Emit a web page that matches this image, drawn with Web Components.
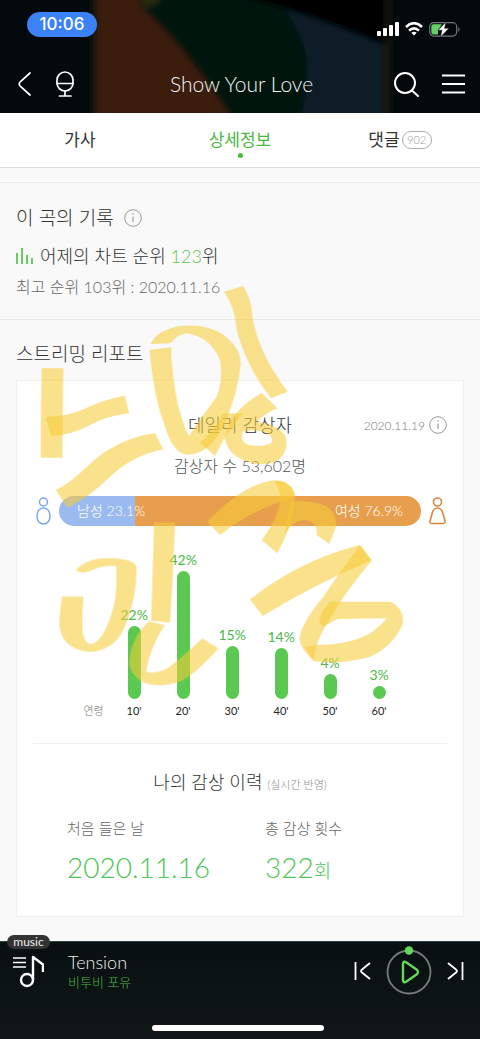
<!DOCTYPE html>
<html lang="ko">
<head>
<meta charset="utf-8">
<meta name="viewport" content="width=device-width, initial-scale=1">
<title>Show Your Love</title>
<style>
html, body { margin: 0; background: #f9f9f9; }
body { font-family: Lato, "Noto Sans CJK KR", sans-serif; font-weight: 300; color: #333; }
</style>
</head>
<body>
<music-app></music-app>
<script>
const base = `<style>
*{box-sizing:border-box}
:host{display:block}
h1,h2,h3,p,dl,dd,dt,ul{margin:0;padding:0;font-weight:inherit}
button{background:none;border:0;padding:0;margin:0;font:inherit;color:inherit;display:flex}
svg{display:block}
a{color:inherit;text-decoration:none}
</style>`;
function define(name, html) {
  const t = document.createElement('template');
  t.innerHTML = base + html;
  customElements.define(name, class extends HTMLElement {
    constructor() {
      super();
      this.attachShadow({ mode: 'open' }).append(t.content.cloneNode(true));
    }
  });
}

define('info-button', `<style>:host{display:inline-block}</style>
<button aria-label="안내"><svg width="18" height="18" viewBox="0 0 18 18" fill="none" stroke="#999"><circle cx="9" cy="9" r="8.3"/><path d="M9 7.5v5.5" stroke-width="1.2"/><circle cx="9" cy="5" r=".8" fill="#999" stroke="none"/></svg></button>`);

define('status-bar', `<style>
:host{display:flex;justify-content:space-between;align-items:flex-start;padding:12px 20px 0 27px;height:56px}
time{background:#3a82f6;color:#fff;font:500 17px/25px Inter,sans-serif;width:70px;height:25px;border-radius:13px;text-align:center}
div{display:flex;gap:6px;padding-top:10px}
</style>
<time>10:06</time>
<div>
<svg width="22" height="14" viewBox="0 0 22 14" fill="#fff"><rect y="9" width="4" height="5" rx="1"/><rect x="6" y="6" width="4" height="8" rx="1"/><rect x="12" y="3" width="4" height="11" rx="1"/><rect x="18" width="4" height="14" rx="1"/></svg>
<svg width="18" height="14" viewBox="0 0 18 14" fill="none" stroke="#fff" stroke-width="2.6"><path d="M1 5Q9-2.6 17 5M4 8.6Q9 4 14 8.6"/><path d="M9 13.6L6.3 10.8Q9 8.6 11.7 10.8Z" fill="#fff" stroke="none"/></svg>
<svg width="31" height="15" viewBox="0 0 31 15"><rect x=".7" y=".7" width="27" height="13.4" rx="4" fill="none" stroke="#70777a" stroke-width="1.2"/><path d="M4.500 2.300H13L9 8V12.600H4.500Q2.300 12.600 2.300 10.500V4.500Q2.300 2.300 4.500 2.300Z" fill="#65ce66"/><path d="M29.300 5Q32 7.500 29.300 10Z" fill="#70777a"/><path d="M17 0L9 8.300H13L11.500 15L20 6.300H15.500Z" fill="#fff" stroke="#061013" stroke-width=".5"/></svg>
</div>`);

define('top-header', `<style>
:host{position:relative;background:#03090c;color:#fff;height:113px;overflow:hidden}
.art{position:absolute;inset:0;width:100%;height:100%}
.front{position:relative}
nav{display:grid;grid-template-columns:1fr auto 1fr;align-items:center;height:56px;padding:0 15px 0 18px}
h1{font-size:21px;line-height:28px;color:#f4f4f4}
.l,.r{display:flex;align-items:center}
.l{gap:24px}.r{justify-content:flex-end;gap:23px}
</style>
<svg class="art" viewBox="0 0 480 113" preserveAspectRatio="none"><defs><filter id="s" x="-10%" y="-10%" width="120%" height="120%"><feGaussianBlur stdDeviation="3"/></filter></defs>
<g filter="url(#s)"><path fill="#15130f" d="M91-29h300v170H91z"/><path fill="#071a25" d="M270-29h112v170H270z"/><path fill="#3b1a07" d="M97-29h43L248 141H97z"/><path fill="#03150a" d="M140-29h115L277 0Q294 22 302 42Q316 80 292 141H246Q190 50 140 6z"/><path fill="#2b2c08" d="M135-20h24V2l-14 6z"/><path fill="#000" d="M230-29h155v74Q310 14 240-4z"/></g></svg>
<div class="front"><status-bar></status-bar>
<nav><div class="l">
<button aria-label="뒤로"><svg width="14" height="26" viewBox="0 0 14 26" fill="none" stroke="#fff" stroke-width="1.700" stroke-linecap="round"><path d="M12 2L2.500 10.500Q0 13 2.500 15.500L12 24"/></svg></button>
<button aria-label="음성 검색"><svg width="18" height="26" viewBox="0 0 18 26" fill="none" stroke="#fff" stroke-width="1.700" stroke-linecap="round"><rect x="1" y="1" width="16" height="19" rx="8"/><path d="M1 12.500h16M9 20v4.500M3.500 25h11.500"/></svg></button></div>
<h1>Show Your Love</h1>
<div class="r">
<button aria-label="검색"><svg width="26" height="26" viewBox="0 0 26 26" fill="none" stroke="#fff" stroke-width="2" stroke-linecap="round"><circle cx="12" cy="12" r="10"/><path d="M19 19.500L25 25"/></svg></button>
<button aria-label="메뉴"><svg width="23" height="20" viewBox="0 0 23 20" stroke="#fff" stroke-width="1.900"><path d="M0 1.500h23M0 10h23M0 18.500h23"/></svg></button></div></nav></div>`);

define('page-tabs', `<style>
:host{background:#fff;border-bottom:1px solid #dedede}
nav{display:grid;grid-template-columns:repeat(3,1fr);height:54px}
a{display:flex;justify-content:center;align-items:center;gap:2px;font-size:17px;line-height:24px;font-weight:400;position:relative}
.on{color:#4cb83f}
.on::after{content:"";position:absolute;left:50%;bottom:9px;width:5px;height:5px;margin-left:-2px;border-radius:50%;background:#4cb83f}
small{font-size:11px;line-height:16px;border:1px solid #aaa;border-radius:9px;width:30px;text-align:center;color:#999;font-weight:300}
</style><nav><a href="#lyrics">가사</a><a href="#info" class="on" aria-current="page">상세정보</a><a href="#talk">댓글<small>902</small></a></nav>`);

define('song-record', `<style>
:host{margin-top:14px;border-top:1px solid #eaeaea;border-bottom:1px solid #e6e6e6;padding:21px 16px 20px;background:#f9f9f9}
h2{display:flex;align-items:center;gap:10px;font-size:19px;line-height:28px}
.rank{display:flex;align-items:center;gap:7px;font-size:18px;line-height:26px;margin-top:11px;color:#333}
b{font-weight:inherit;color:#59c854}
.best{font-size:16px;line-height:24px;margin-top:6px;color:#666}
</style><h2>이 곡의 기록 <info-button></info-button></h2>
<p class="rank"><svg width="17" height="16" viewBox="0 0 17 16" stroke="#59c854" stroke-width="1.800"><path d="M1 5v11M6 0v16M11 7v9M16 10v6"/></svg><span>어제의 차트 순위 <b>123</b>위</span></p>
<p class="best">최고 순위 103위 : 2020.11.16</p>`);

define('gender-bar', `<style>
:host{display:flex;align-items:center;justify-content:space-between;gap:8px}
.bar{flex:1;height:30px;border-radius:15px;overflow:hidden;display:flex;justify-content:space-between;font-size:14px;line-height:30px;padding:0 18px;color:#fff;background:linear-gradient(90deg,#9bbaef 21%,#e79f4e 21%)}
</style>
<svg width="15" height="28" viewBox="0 0 15 28" fill="none" stroke="#7aa7ed" stroke-width="1.500"><circle cx="7.500" cy="5" r="4"/><path d="M7.500 11C3 11 1 15 1 19.500C1 24 4 27 7.500 27S14 24 14 19.500C14 15 12 11 7.500 11Z"/></svg>
<div class="bar"><span>남성 23.1%</span><span>여성 76.9%</span></div>
<svg width="17" height="28" viewBox="0 0 17 28" fill="none" stroke="#e0853c" stroke-width="1.600"><circle cx="8.500" cy="5" r="4"/><path d="M8.500 11Q5 11 3.500 15L1 24Q.6 26.500 3 26.500H14Q16.400 26.500 16 24L13.500 15Q12 11 8.500 11Z"/></svg>`);

define('age-bar', `<style>
:host{display:flex;flex-direction:column;align-items:center;width:49px;color:#4db848;font-size:14px;line-height:20px;font-weight:400}
i{display:block;width:13px;height:var(--h);border-radius:7px;background:#5bc951}
.k{font-size:11px;line-height:14px;color:#222;margin-top:5px}
</style><slot name="share"></slot><i></i><span class="k"><slot></slot></span>`);

define('age-chart', `<style>
:host{display:flex;align-items:flex-end;justify-content:center;height:170px;padding-left:7px}
.axis{font-size:11px;line-height:14px;color:#777;padding-right:6px}
age-bar span{margin-bottom:1px}
</style><span class="axis">연령</span>
<age-bar style="--h:73px"><span slot="share">22%</span>10'</age-bar>
<age-bar style="--h:128px"><span slot="share">42%</span>20'</age-bar>
<age-bar style="--h:53px"><span slot="share">15%</span>30'</age-bar>
<age-bar style="--h:51px"><span slot="share">14%</span>40'</age-bar>
<age-bar style="--h:25px"><span slot="share">4%</span>50'</age-bar>
<age-bar style="--h:13px"><span slot="share">3%</span>60'</age-bar>`);

define('listen-history', `<style>
:host{border-top:1px solid #f0f0f0;padding-top:24px}
h3{font-size:18px;line-height:28px;text-align:center}
small{font-size:11px;color:#888}
dl{display:grid;grid-template-columns:1fr 1fr;padding:18px 0 0 34px;gap:16px}
dt{font-size:15px;line-height:22px;color:#666}
dd{font-size:28px;line-height:36px;color:#4fc558;margin-top:10px}
dd span{font-size:19px}
</style><h3>나의 감상 이력 <small>(실시간 반영)</small></h3>
<dl><div><dt>처음 들은 날</dt><dd>2020.11.16</dd></div><div><dt>총 감상 횟수</dt><dd>322<span>회</span></dd></div></dl>`);

define('streaming-report', `<style>
:host{padding:20px 16px 24px;background:#f9f9f9}
h2{font-size:19px;line-height:28px}
.card{background:#fff;border:1px solid #f0f0f0;margin-top:12px;padding:31px 16px 27px}
.head{display:grid;grid-template-columns:1fr auto 1fr;align-items:center}
.head h3{grid-column:2;font-size:18px;line-height:26px}
.date{justify-self:end;display:flex;align-items:center;gap:4px;font-size:12px;color:#777}
.count{font-size:16px;line-height:24px;text-align:center;margin-top:16px;color:#555}
gender-bar{margin:18px 1px 0 3px}
age-chart{margin:22px 0 25px}
</style><h2>스트리밍 리포트</h2>
<div class="card"><div class="head"><h3>데일리 감상자</h3><span class="date">2020.11.19 <info-button></info-button></span></div>
<p class="count">감상자 수 53,602명</p>
<gender-bar></gender-bar><age-chart></age-chart><listen-history></listen-history></div>`);

/* Translucent marker handwriting that lies over the report. */
define('marker-note', `<style>
:host{position:absolute;left:0;right:0;top:280px;pointer-events:none}
svg{width:100%;height:auto}
path{fill:#f6cb38;fill-opacity:.58}
</style><svg viewBox="0 0 1440 1260" aria-hidden="true">
<defs><filter id="soft" x="-5%" y="-5%" width="110%" height="110%"><feGaussianBlur stdDeviation="2"/></filter></defs>
<g filter="url(#soft)">
<g transform="translate(60 0)">
<path d="M65 265H130Q128 400 127 533H62Q62 400 65 265Z"/>
<path d="M77 411Q150 408 190 388Q250 358 314 347L327 400Q260 408 210 435Q150 467 93 468Z"/>
<path d="M107 630Q150 610 200 560Q290 475 405 460L430 508Q340 525 270 590Q210 650 142 683Z"/>
<path d="M389 210L453 202Q455 290 475 380Q495 450 507 468Q530 430 590 350Q610 300 600 240Q570 170 500 160Q475 162 450 190L392 192Q410 150 480 138Q560 130 610 165Q660 200 662 250Q655 340 610 440Q565 525 500 524Q460 520 435 440Q400 350 389 210Z"/>
<path d="M612 35L670 18Q695 60 697 110Q715 220 803 335L752 355Q680 260 650 150Q645 80 612 35Z"/>
</g>
<g transform="translate(570 240)">
<path fill-rule="evenodd" d="M215 98L262 145Q225 160 200 185Q255 190 285 225Q300 270 265 300Q230 320 180 308Q110 285 105 235Q110 160 215 98ZM158 215Q148 245 175 255Q220 262 245 248Q250 225 225 217Q190 205 158 215Z"/>
<path d="M100 160L160 160Q110 215 75 288L30 248Q70 215 100 160Z"/>
</g>
<g transform="translate(120 630)">
<path d="M107 240Q140 205 200 204Q290 205 290 235Q290 330 250 420Q220 480 150 486Q70 480 58 410Q58 370 66 320L130 320Q125 380 128 430Q135 462 155 463Q200 445 225 330Q232 270 228 228Q185 225 150 243Q120 252 107 240Z"/>
<path d="M342 97L405 97Q400 250 390 398L333 392Q338 250 342 97Z"/>
<path d="M327 393L374 406Q330 470 318 545Q350 555 390 530Q450 480 487 445L535 475Q470 550 420 575Q360 595 310 578Q265 550 268 510Q275 440 327 393Z"/>
</g>
<g transform="translate(570 630)">
<path d="M52 95Q150-10 240-28Q290-35 310 5Q320 30 270 35Q170 70 90 135Z"/>
<path d="M255-28Q300-30 315 10Q320 80 262 190L215 150Q275 70 270 10Z"/>
<path d="M300 35Q350 28 400 45Q440 60 438 110L418 162L380 135Q385 95 345 90Q310 90 285 130Z"/>
<path d="M180 328Q330 210 510 165L545 210Q380 280 218 378Z"/>
<path d="M510 165L545 212Q470 300 430 370Q370 460 372 514Q325 470 329 440Q340 390 400 320Q440 260 510 165Z"/>
<path d="M420 335H600Q640 350 639 400Q610 470 540 500Q450 525 372 514L345 470L380 465Q480 465 540 430Q575 405 590 385Q480 385 440 388L400 410Q370 390 420 335Z"/>
</g></g></svg>`);

define('mini-player', `<style>
:host{position:relative;background:linear-gradient(#071011,#111716);border-top:1px solid #2b4540;color:#f0f0f0;height:99px;padding:6px 16px 9px 12px;display:flex;flex-direction:column;justify-content:space-between}
.tag{position:absolute;left:7px;top:-7px;background:#333;border-radius:7px;font-size:12px;line-height:14px;width:43px;text-align:center;color:#eee;font-weight:400}
.row{display:flex;align-items:center;height:46px}
.song{flex:1;margin-left:24px}
.song h2{font-size:18px;line-height:22px}
.song p{font-size:13px;line-height:18px;color:#4db848}
.ctl{display:flex;align-items:center;gap:15px}
.home{width:172px;height:6px;border-radius:3px;background:#fff;margin:0 auto}
</style><span class="tag">music</span>
<div class="row">
<button aria-label="재생목록"><svg width="32" height="34" viewBox="0 0 32 34" fill="none" stroke="#fff"><path stroke-width="1.600" d="M1 4h13M1 8.500h13M1 13h13"/><circle cx="15" cy="26" r="6" stroke-width="2.400"/><path stroke-width="2.400" d="M21 26V3L31 10.500V18" stroke-linejoin="round"/></svg></button>
<div class="song"><h2>Tension</h2><p>비투비 포유</p></div>
<div class="ctl">
<button aria-label="이전 곡"><svg width="17" height="20" viewBox="0 0 17 20" fill="none" stroke="#fff" stroke-width="1.800"><path d="M1.500 1v18M16 2L8 8.500Q6 10 8 11.500L16 18"/></svg></button>
<button aria-label="재생"><svg width="46" height="50" viewBox="0 0 46 50" fill="none"><circle cx="23" cy="26" r="21.500" stroke="#777b7c" stroke-width="1.800"/><circle cx="23" cy="4.500" r="4.200" fill="#65d75b"/><path d="M17 18Q17 14.500 20.500 16.500L30.500 23.500Q33.500 26 30.500 28.500L20.500 35.500Q17 37.500 17 34Z" stroke="#65d75b" stroke-width="2.400"/></svg></button>
<button aria-label="다음 곡"><svg width="17" height="20" viewBox="0 0 17 20" fill="none" stroke="#fff" stroke-width="1.800"><path d="M15.500 1v18M1 2L9 8.500Q11 10 9 11.500L1 18"/></svg></button>
</div></div><div class="home"></div>`);

define('music-app', `<style>
:host{position:relative;display:flex;flex-direction:column;min-height:100vh;background:#fafafa}
main{flex:1;background:#f9f9f9}
</style><top-header></top-header><page-tabs></page-tabs><main><song-record></song-record><streaming-report></streaming-report></main><marker-note></marker-note><mini-player></mini-player>`);
</script>
</body>
</html>
